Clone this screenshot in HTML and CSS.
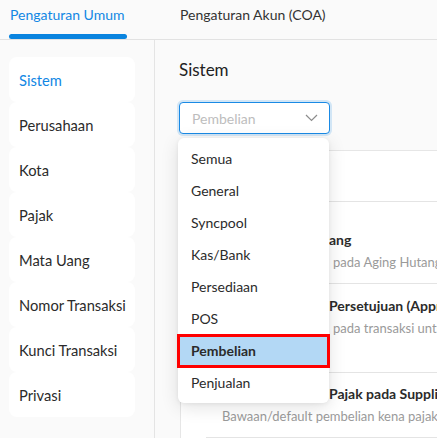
FILE: index.html
```html
<!DOCTYPE html>
<html>
<head>
<meta charset="utf-8">
<link rel="stylesheet" href="styles.css">
</head>
<body>
<div class="tabs">
  <div class="tab tab-active"><span class="tab-label">Pengaturan Umum</span><span class="tab-bar"></span></div>
  <div class="tab tab-second"><span class="tab-label">Pengaturan Akun (COA)</span></div>
</div>
<div class="main">
  <aside class="sidebar">
    <ul class="menu">
      <li class="menu-item menu-item-active">Sistem</li>
      <li class="menu-item">Perusahaan</li>
      <li class="menu-item">Kota</li>
      <li class="menu-item">Pajak</li>
      <li class="menu-item">Mata Uang</li>
      <li class="menu-item">Nomor Transaksi</li>
      <li class="menu-item">Kunci Transaksi</li>
      <li class="menu-item">Privasi</li>
    </ul>
  </aside>
  <section class="content">
    <h2 class="heading">Sistem</h2>
    <div class="select-wrap">
      <div class="select">
        <span class="select-placeholder">Pembelian</span>
        <svg class="chevron" width="13" height="8" viewBox="0 0 13 8"><polyline points="1,1 6.5,6.5 12,1" fill="none" stroke="#8c8c8c" stroke-width="1.2"/></svg>
      </div>
      <ul class="dropdown">
        <li class="option">Semua</li>
        <li class="option">General</li>
        <li class="option">Syncpool</li>
        <li class="option">Kas/Bank</li>
        <li class="option">Persediaan</li>
        <li class="option">POS</li>
        <li class="option option-selected">Pembelian</li>
        <li class="option">Penjualan</li>
      </ul>
    </div>
    <div class="card">
      <div class="row row-head"></div>
      <div class="row row-2">
        <div class="row-title"><span class="lead">Aging Hut</span>ang</div>
        <div class="row-sub"><span class="lead lead-sub">Termin</span>pada Aging Hutang</div>
      </div>
      <div class="row row-3">
        <div class="row-title"><span class="lead">Gunakan</span>Persetujuan (Approval)</div>
        <div class="row-sub"><span class="lead lead-sub">Aktifkan</span>pada transaksi untuk pembelian</div>
      </div>
      <div class="row row-4">
        <div class="row-title"><span class="lead">Kena</span>Pajak pada Supplier</div>
        <div class="row-sub">Bawaan/default pembelian kena pajak untuk supplier baru</div>
      </div>
    </div>
  </section>
</div>
</body>
</html>
```
FILE: styles.css
```css
* { box-sizing: border-box; }
html, body { margin: 0; padding: 0; }
body {
  background: #fafafa;
  font-family: "Lato", "Open Sans", sans-serif;
  font-size: 14px;
  color: #333;
  width: 437px;
  height: 438px;
  overflow: hidden;
}
ul { list-style: none; margin: 0; padding: 0; }

.tabs {
  display: flex;
  height: 40px;
  border-bottom: 1px solid #e2e2e2;
}
.tab {
  display: flex;
  flex-direction: column;
  line-height: 20px;
}
.tab-active {
  margin-left: 9px;
  width: 118px;
  padding-top: 5px;
  color: #1187e4;
}
.tab-label { white-space: nowrap; }
.tab-active .tab-label { padding-left: 1px; }
.tab-bar {
  margin-top: auto;
  height: 5px;
  border-radius: 3px;
  background: #0a84df;
}
.tab-second {
  margin-left: 53px;
  padding-top: 5px;
  color: #333;
}

.main { display: flex; height: 398px; }
.sidebar {
  width: 155px;
  flex: none;
  border-right: 1px solid #e4e4e4;
  padding-top: 17px;
  padding-left: 9px;
}
.menu {
  width: 126px;
}
.menu-item {
  height: 45px;
  line-height: 45px;
  padding-left: 10px;
  padding-top: 1px;
  font-size: 14.7px;
  background: #fff;
  border-radius: 8px;
  color: #2b2b2b;
}
.menu-item-active { color: #1187e4; }

.content {
  flex: 1;
  padding-left: 24px;
  min-width: 0;
}
.heading {
  margin: 18px 0 0;
  font-size: 17px;
  font-weight: 400;
  line-height: 24px;
  color: #222;
}
.select-wrap {
  position: relative;
  margin-top: 20px;
  width: 151px;
}
.select {
  height: 32px;
  border: 1px solid #1a8ae5;
  border-radius: 4px;
  box-shadow: 0 0 0 2px rgba(26, 138, 229, 0.18);
  background: #fff;
  display: flex;
  align-items: center;
  justify-content: space-between;
  padding: 0 11px 0 12px;
}
.select-placeholder { color: #bdbdbd; }
.chevron { display: block; }

.dropdown {
  position: absolute;
  z-index: 5;
  top: 36px;
  left: -1px;
  width: 151px;
  padding: 5px 0 4px;
  background: #fff;
  border-radius: 6px;
  box-shadow: 0 4px 18px rgba(0, 0, 0, 0.12), 0 1px 4px rgba(0,0,0,0.06);
}
.option {
  height: 32px;
  line-height: 32px;
  padding-left: 13px;
  color: #2b2b2b;
}
.option-selected {
  background: #b3d8f5;
  font-weight: 700;
  outline: 3px solid #ff0000;
  outline-offset: -2px;
}

.card {
  margin-top: 16px;
  margin-left: 1px;
  width: 400px;
  background: #fff;
  border: 1px solid #e6e6e6;
  border-right: none;
}
.row {
  margin-left: 25px;
  padding-left: 16px;
  border-bottom: 1px solid #e4e4e4;
  white-space: nowrap;
}
.row-head { height: 51px; }
.row-2 { height: 82px; padding-top: 28px; }
.row-3 { height: 89px; padding-top: 12px; }
.row-4 { height: 65px; padding-top: 11px; }
.row-title {
  font-weight: 700;
  line-height: 20px;
  color: #2b2b2b;
}
.row-sub {
  margin-top: 2px;
  font-size: 13px;
  line-height: 20px;
  color: #9a9a9a;
}
.lead {
  display: inline-block;
  width: 107px;
  overflow: hidden;
  vertical-align: top;
}
.lead-sub { width: 111px; }
```
